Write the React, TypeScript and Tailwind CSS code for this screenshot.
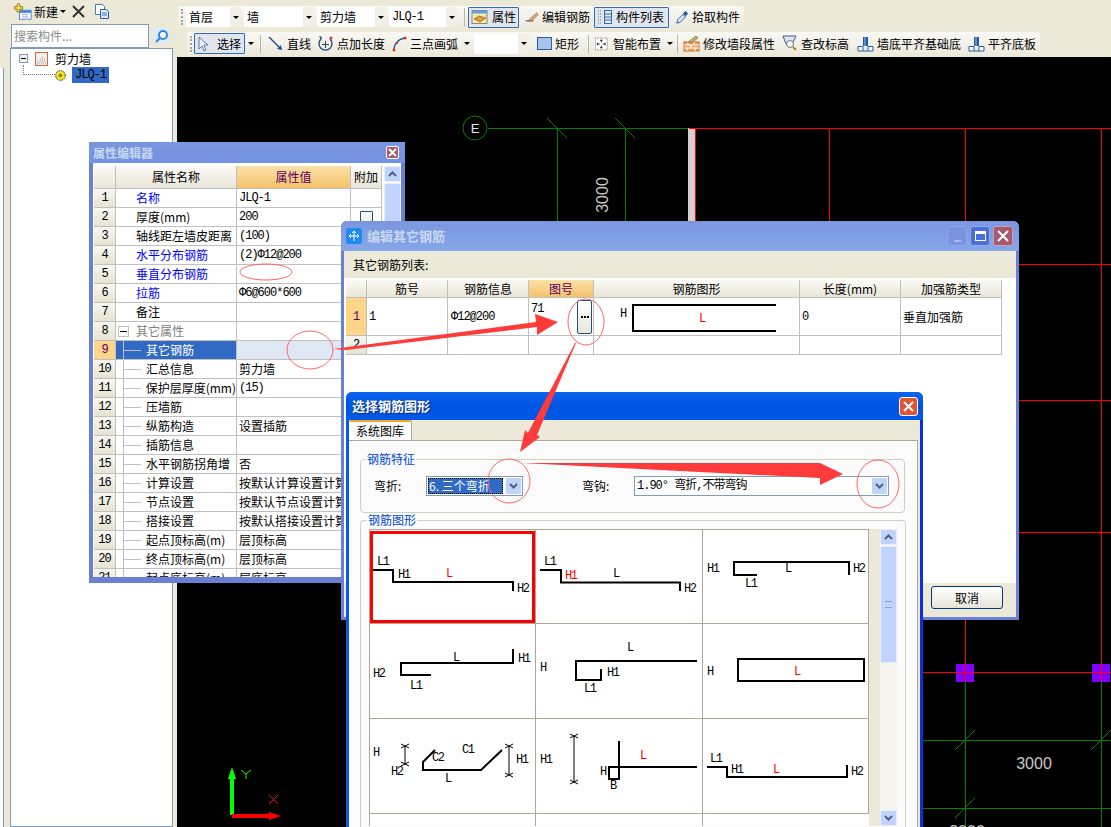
import type { ReactNode } from "react";

const mono = "font-['Liberation_Mono','Noto_Sans_CJK_SC',monospace] text-[12px] tracking-[-1px]";
const headCell = "flex items-center justify-center border-r border-b border-[#c0c0c0] bg-gradient-to-b from-[#fbfaf5] to-[#e9e6d8] text-[12px]";

function Caret() {
  return <span className="w-0 h-0 border-x-[3px] border-x-transparent border-t-[3px] border-t-black" />;
}

function IconNew() {
  return (
    <svg width="18" height="20" viewBox="0 0 20 20">
      <rect x="6" y="8" width="13" height="10" fill="#fff" stroke="#4a78c0" />
      <rect x="6" y="8" width="13" height="3" fill="#4a86d8" />
      <path d="M9 13h7M9 15.500h7" stroke="#7ea6d8" />
      <path d="M3.500 1h3v3h3v3h-3v3h-3V7h-3V4h3z" fill="#f6d84a" stroke="#8a7a20" />
    </svg>
  );
}

function IconCopy() {
  return (
    <svg width="16" height="17" viewBox="0 0 16 17">
      <path d="M1.500 1.500h7l2 2v8h-9z" fill="#fff" stroke="#4a78b8" />
      <path d="M6.500 6.500h6l2 2v7h-8z" fill="#dce9fa" stroke="#2a5ca8" />
      <path d="M8 10h5M8 12h5" stroke="#4a78b8" />
    </svg>
  );
}

function IconWall() {
  return (
    <svg width="14" height="14" viewBox="0 0 14 14">
      <rect x="0.500" y="0.500" width="12" height="13" fill="#f4efe8" stroke="#c86a3a" />
      <path d="M2 11h9M3 9h7M5 7h5M7 5h2" stroke="#9a9a9a" strokeDasharray="1 1" />
    </svg>
  );
}

function IconGear() {
  return (
    <svg width="11" height="11" viewBox="0 0 11 11">
      <circle cx="5.500" cy="5.500" r="4.800" fill="#f4ea20" stroke="#222" strokeDasharray="1.500 1" />
      <circle cx="5.500" cy="5.500" r="2" fill="#8a8a20" />
    </svg>
  );
}

const toolIcons: Record<string, ReactNode> = {
  attr: (
    <svg width="18" height="16" viewBox="0 0 18 16">
      <rect x="1" y="1.500" width="15" height="13" fill="#f8e8b8" stroke="#8a8a70" />
      <rect x="1" y="1.500" width="15" height="3" fill="#6aa0d8" />
      <path d="M3 10l5-3 7 2-6 4z" fill="#e89a28" stroke="#6a5a20" strokeWidth="0.600" />
    </svg>
  ),
  edit: (
    <svg width="18" height="16" viewBox="0 0 18 16">
      <path d="M1 13h10" stroke="#111" />
      <path d="M6 11l9-8 2 2-9 8-3 0z" fill="#e8b878" stroke="#7a3a20" strokeWidth="0.800" />
    </svg>
  ),
  list: (
    <svg width="16" height="16" viewBox="0 0 16 16">
      <path d="M1 2h3M1 5h3M1 8h3M1 11h3M1 14h3" stroke="#777" strokeDasharray="1 1" />
      <rect x="7.500" y="1.500" width="7" height="13" fill="#dbe8f6" stroke="#3a6aa0" />
      <path d="M8 5h6M8 8h6M8 11h6" stroke="#3a6aa0" />
    </svg>
  ),
  pick: (
    <svg width="14" height="17" viewBox="0 0 16 17">
      <path d="M2 15l1-4 6-6 3 3-6 6z" fill="#cfe4f8" stroke="#1f5ca8" />
      <path d="M9 4l3-3 3 3-3 3z" fill="#1f5ca8" />
    </svg>
  ),
  select: (
    <svg width="12" height="16" viewBox="0 0 12 16">
      <path d="M2 1v12l3-3 2 5 2-1-2-5h4z" fill="#e8eef8" stroke="#6a7a98" />
    </svg>
  ),
  line: (
    <svg width="16" height="16" viewBox="0 0 16 16">
      <path d="M1 1l12 12" stroke="#1f4f9a" strokeWidth="1.400" />
      <path d="M14 14l-5-1 4-4z" fill="#1f4f9a" />
    </svg>
  ),
  point: (
    <svg width="17" height="17" viewBox="0 0 17 17">
      <path d="M4 4a6.500 6.500 0 1 0 9 0" fill="none" stroke="#26457a" strokeWidth="1.300" />
      <path d="M8.500 6v7M5 9.500h7" stroke="#26457a" />
      <circle cx="14" cy="3" r="1.500" fill="#c83a3a" />
      <path d="M2 1l3 1-1 3z" fill="#26457a" />
    </svg>
  ),
  arc: (
    <svg width="15" height="16" viewBox="0 0 15 16">
      <path d="M2 14C2 8 6 3 13 2" fill="none" stroke="#1f5ca8" strokeWidth="1.300" />
      <circle cx="2" cy="14" r="1.500" fill="#d83a2a" />
      <circle cx="13" cy="2" r="1.500" fill="#d83a2a" />
      <circle cx="5" cy="7" r="1.200" fill="#d83a2a" />
    </svg>
  ),
  rect: (
    <svg width="15" height="13" viewBox="0 0 15 13">
      <rect x="0.500" y="0.500" width="14" height="12" fill="#a8c4ee" stroke="#2a5ca8" />
    </svg>
  ),
  smart: (
    <svg width="19" height="16" viewBox="0 0 19 16">
      <rect x="0.500" y="0.500" width="15" height="15" fill="#fff" stroke="#555" strokeDasharray="1 1" />
      <path d="M8 3v10M3 8h10" stroke="#111" strokeDasharray="3 4" />
      <path d="M8 2l-2 2h4zM8 14l-2-2h4zM2 8l2-2v4zM14 8l-2-2v4z" fill="#111" />
    </svg>
  ),
  modify: (
    <svg width="17" height="17" viewBox="0 0 17 17">
      <rect x="1" y="7" width="15" height="9" fill="#f0a060" stroke="#c86a2a" />
      <path d="M1 10h15M1 13h15M5 7v3M11 7v3M8 10v3M4 13v3M12 13v3" stroke="#fff" />
      <path d="M5 7l8-6 2 2-7 5z" fill="#c8b070" stroke="#6a5a30" strokeWidth="0.600" />
    </svg>
  ),
  elevation: (
    <svg width="16" height="17" viewBox="0 0 16 17">
      <path d="M1 1h13l-4 8H4z" fill="#dce6f4" stroke="#3a5a8a" />
      <circle cx="8" cy="9" r="3.500" fill="#f4f4f4" stroke="#777" />
      <path d="M11 12l3 3" stroke="#b8862a" strokeWidth="2" />
    </svg>
  ),
  align: (
    <svg width="17" height="16" viewBox="0 0 17 16">
      <path d="M6 1h5v9H6z" fill="#1f5ca8" />
      <path d="M8 1v9" stroke="#9ac0ea" />
      <path d="M1 10.500h5v4.500H1zM11 10.500h5v4.500h-5z" fill="#fff" stroke="#1f5ca8" />
      <path d="M6 15h5" stroke="#1f5ca8" />
    </svg>
  ),
};

function ToolButton({ w, icon, label, on, caret, wide }: { w: string; icon: string; label: string; on?: boolean; caret?: boolean; wide?: boolean }) {
  return (
    <div className={`${w} h-[21px] shrink-0 flex items-center ${wide ? "gap-[8px]" : "gap-[3px]"} pl-[2px] rounded-[1px] border ${on ? "border-[#316ac5] bg-[#e1e6ee]" : "border-transparent"}`}>
      {toolIcons[icon]}
      <span className="whitespace-nowrap">{label}</span>
      {caret && <span className="ml-[3px] flex"><Caret /></span>}
    </div>
  );
}

function Combo({ w, label }: { w: string; label: string }) {
  return (
    <div className={`${w} h-[20px] shrink-0 flex items-center bg-white pl-[3px]`}>
      <span className={`flex-1 whitespace-nowrap ${label === "JLQ-1" ? mono : ""}`}>{label}</span>
      <span className="w-[11px] h-full flex items-center justify-center bg-[#f1efe6]"><Caret /></span>
    </div>
  );
}

function Sep() {
  return <span className="w-px h-[18px] bg-[#b8b6a8] shrink-0" />;
}

function Grip() {
  return <span className="w-[2px] h-[16px] shrink-0 border-l-2 border-dotted border-[#a8a698]" />;
}

function Toolbars() {
  return (
    <div className="h-[57px] shrink-0 flex flex-col text-[12px] text-black">
      <div className="mt-[6px] ml-px w-[566px] h-[22px] flex items-center gap-[3px] pl-[3px] rounded-[2px] bg-gradient-to-b from-[#f9f8f3] to-[#ece9dc]">
        <Grip />
        <Combo w="w-[55px]" label="首层" />
        <Combo w="w-[70px]" label="墙" />
        <Combo w="w-[69px]" label="剪力墙" />
        <Combo w="w-[68px]" label="JLQ-1" />
        <span className="w-[2px]" />
        <Sep />
        <ToolButton w="w-[51px]" icon="attr" label="属性" on />
        <ToolButton w="w-[69px]" icon="edit" label="编辑钢筋" />
        <ToolButton w="w-[75px]" icon="list" label="构件列表" on />
        <ToolButton w="w-[72px]" icon="pick" label="拾取构件" />
      </div>
      <div className="mt-[4px] ml-[10px] w-[853px] h-[23px] flex items-center pl-[3px] rounded-[2px] bg-gradient-to-b from-[#f9f8f3] to-[#ece9dc]">
        <Grip />
        <div className="w-[2px] shrink-0" />
        <ToolButton w="w-[51px]" icon="select" label="选择" on wide />
        <span className="mx-[3px] flex"><Caret /></span>
        <span className="w-[3px]" />
        <Sep />
        <span className="w-[4px]" />
        <ToolButton w="w-[49px]" icon="line" label="直线" />
        <ToolButton w="w-[75px]" icon="point" label="点加长度" />
        <ToolButton w="w-[84px]" icon="arc" label="三点画弧" caret />
        <span className="w-[1px]" />
        <Combo w="w-[55px]" label="" />
        <span className="w-[5px]" />
        <ToolButton w="w-[46px]" icon="rect" label="矩形" />
        <span className="w-[8px]" />
        <Sep />
        <span className="w-[3px]" />
        <ToolButton w="w-[82px]" icon="smart" label="智能布置" caret />
        <span className="w-[3px]" />
        <Sep />
        <span className="w-[2px]" />
        <ToolButton w="w-[99px]" icon="modify" label="修改墙段属性" />
        <ToolButton w="w-[75px]" icon="elevation" label="查改标高" />
        <ToolButton w="w-[111px]" icon="align" label="墙底平齐基础底" />
        <ToolButton w="w-[75px]" icon="align" label="平齐底板" />
      </div>
    </div>
  );
}

function Sidebar() {
  return (
    <aside className="w-[177px] shrink-0 flex text-[12px] text-black">
      <div className="w-[10px] shrink-0 flex flex-col pt-[68px]">
        <div className="flex-1 w-[4px] bg-white border-r border-[#7f9db9]" />
      </div>
      <div className="w-[163px] flex flex-col">
        <div className="h-[23px] flex items-center gap-[2px] pl-[4px]">
          <IconNew />
          <span>新建</span>
          <Caret />
          <svg width="15" height="15" viewBox="0 0 15 15" className="ml-[3px]">
            <path d="M2 2l11 11M13 2L2 13" stroke="#333" strokeWidth="2" />
          </svg>
          <span className="w-[4px]" />
          <IconCopy />
        </div>
        <div className="h-[25px] flex items-center">
          <div className="w-[138px] h-[24px] flex items-center pl-[2px] bg-white border border-[#7f9db9] text-[#8a8a8a] ml-px">搜索构件...</div>
          <div className="w-[15px] h-[15px] ml-[5px] flex items-center justify-center bg-[#dcebfa]">
            <svg width="14" height="14" viewBox="0 0 14 14">
              <circle cx="8" cy="6" r="4" fill="#fff" stroke="#2a8ae0" strokeWidth="2" />
              <path d="M5 9l-4 4" stroke="#2a8ae0" strokeWidth="2.200" />
            </svg>
          </div>
        </div>
        <div className="flex-1 bg-white border border-[#7f9db9] pt-px pl-[8px]">
          <div className="flex items-center h-[17px]">
            <span className="w-[9px] h-[9px] border border-[#7f9db9] bg-[#eef0ea] flex items-center justify-center">
              <span className="w-[5px] h-px bg-black" />
            </span>
            <span className="ml-[7px] mr-[6px] flex"><IconWall /></span>
            <span>剪力墙</span>
          </div>
          <div className="flex items-center h-[16px] pl-[4px]">
            <span className="w-[32px] h-[10px] -mt-[10px] border-l border-b border-dotted border-[#808080]" />
            <IconGear />
            <span className={`${mono} ml-[6px] px-[3px] h-[16px] leading-[16px] bg-[#316ac5] text-black`}>JLQ-1</span>
          </div>
        </div>
      </div>
    </aside>
  );
}

function Canvas() {
  const ticks = [[557, 128], [625, 128], [965, 740], [1101, 740], [965, 808]];
  return (
    <div className="flex-1 bg-black overflow-hidden">
      <svg width="934" height="770" viewBox="177 57 934 770" className="block">
        <g stroke="#008000" fill="none">
          <circle cx="475" cy="128" r="12" />
          <path d="M488 128.500H688M557.500 128V221M625.500 128V221M923 740.500H1111M923 808.500H1111M965.500 682V827M1101.500 682V827" />
          {ticks.map(([x, y]) => (
            <path key={`${x}-${y}`} d={`M${x - 10} ${y - 10}L${x + 10} ${y + 10}`} transform={y > 500 ? `rotate(90 ${x} ${y})` : undefined} />
          ))}
        </g>
        <text x="475" y="133" fill="#e8e8e8" fontSize="13" textAnchor="middle" fontFamily="Liberation Sans">E</text>
        <text x="608" y="195" fill="#c8c8c8" fontSize="16" textAnchor="middle" fontFamily="Liberation Sans" transform="rotate(-90 608 195)">3000</text>
        <text x="1034" y="769" fill="#c8c8c8" fontSize="16" textAnchor="middle" fontFamily="Liberation Sans">3000</text>
        <text x="967" y="837" fill="#c8c8c8" fontSize="16" textAnchor="middle" fontFamily="Liberation Sans">3000</text>
        <rect x="688" y="128" width="7" height="94" fill="#d8d0d0" />
        <path d="M695.500 128V221" stroke="#f00" />
        <path d="M689 128.500H1111M1019 264.500H1111M923 400.500H1111M923 532.500H1111" stroke="#f00" />
        <path d="M829.500 128V221M965.500 128V221M1101.500 128V664M965.500 620V664" stroke="#f00" />
        <rect x="956" y="664" width="18" height="18" fill="#8000ff" />
        <rect x="1092" y="664" width="18" height="18" fill="#8000ff" />
        <path d="M965.500 664V682M1101.500 664V682M923 672.500H1111" stroke="#f00" />
        <path d="M232 815V772" stroke="#00ff00" strokeWidth="4" />
        <path d="M232 767l4 12h-8z" fill="#00ff00" />
        <path d="M232 816H272" stroke="#f00" strokeWidth="4" />
        <path d="M281 816l-12-4v8z" fill="#f00" />
        <path d="M241 770l5 4 5-4M246 774v5" stroke="#00ff00" fill="none" />
        <path d="M269 795l9 9M278 795l-9 9" stroke="#f00" />
      </svg>
    </div>
  );
}

type PropRow = { name: string; value?: string; blue?: boolean; child?: boolean; valueMono?: boolean };

const propRows: PropRow[] = [
  { name: "名称", value: "JLQ-1", blue: true, valueMono: true },
  { name: "厚度(mm)", value: "200", valueMono: true },
  { name: "轴线距左墙皮距离", value: "(100)", valueMono: true },
  { name: "水平分布钢筋", value: "(2)Φ12@200", blue: true, valueMono: true },
  { name: "垂直分布钢筋", blue: true },
  { name: "拉筋", value: "Φ6@600*600", blue: true, valueMono: true },
  { name: "备注" },
  { name: "其它属性" },
  { name: "其它钢筋", child: true },
  { name: "汇总信息", value: "剪力墙", child: true },
  { name: "保护层厚度(mm)", value: "(15)", child: true, valueMono: true },
  { name: "压墙筋", child: true },
  { name: "纵筋构造", value: "设置插筋", child: true },
  { name: "插筋信息", child: true },
  { name: "水平钢筋拐角增", value: "否", child: true },
  { name: "计算设置", value: "按默认计算设置计算", child: true },
  { name: "节点设置", value: "按默认节点设置计算", child: true },
  { name: "搭接设置", value: "按默认搭接设置计算", child: true },
  { name: "起点顶标高(m)", value: "层顶标高", child: true },
  { name: "终点顶标高(m)", value: "层顶标高", child: true },
  { name: "起点底标高(m)", value: "层底标高", child: true },
];

function ScrollUp() {
  return (
    <div className="h-[16px] shrink-0 flex items-center justify-center rounded-[2px] border border-[#e8eefc] bg-[#c1d3fb]">
      <svg width="9" height="6" viewBox="0 0 9 6"><path d="M1 5l3.500-3.500L8 5" fill="none" stroke="#4d6185" strokeWidth="2" /></svg>
    </div>
  );
}

function PropertyWindow() {
  return (
    <div className="absolute left-[89px] top-[142px] w-[316px] h-[441px] flex flex-col bg-white border-x-[4px] border-b-[6px] border-[#6a80d4] text-[12px] text-black">
      <div className="h-[21px] -mx-[4px] shrink-0 flex items-center justify-between pl-[4px] pr-[6px] bg-gradient-to-b from-[#7a96df] to-[#7392e2]">
        <span className="font-bold text-[#c9d8f2]">属性编辑器</span>
        <span className="w-[13px] h-[13px] flex items-center justify-center rounded-[2px] border border-white bg-[#a8596e]">
          <svg width="9" height="9" viewBox="0 0 9 9"><path d="M1 1l7 7M8 1L1 8" stroke="#fff" strokeWidth="2" /></svg>
        </span>
      </div>
      <div className="flex-1 flex pt-[3px] pl-px bg-white overflow-hidden">
        <div className="w-[288px] shrink-0 overflow-hidden">
          <div className="grid grid-cols-[22px_121px_114px_31px] grid-rows-[23px] auto-rows-[19px]">
            <div className={headCell} />
            <div className={headCell}>属性名称</div>
            <div className="flex items-center justify-center border-r border-b border-[#c0c0c0] bg-gradient-to-b from-[#fbe0a8] to-[#f4c268] text-[#5c0060]">属性值</div>
            <div className={headCell}>附加</div>
            {propRows.map((r, i) => {
              const selected = i === 8;
              const group = i === 7;
              return (
                <div key={r.name} className="contents">
                  <div className={`flex items-center justify-center border-r border-b border-[#c0c0c0] ${mono} ${selected ? "bg-[#ffd58a] text-[#5c0060]" : "bg-gradient-to-b from-[#f8f7f0] to-[#e6e3d2]"}`}>{i + 1}</div>
                  <div className={`flex items-center border-r border-b border-[#c0c0c0] whitespace-nowrap ${selected ? "bg-[#316ac5] text-white" : ""} ${r.blue ? "text-[#0000ff]" : ""} ${group ? "text-[#808080]" : ""}`}>
                    {r.child ? (
                      <>
                        <span className="w-[8px] h-full border-r border-[#c0c0c0]" />
                        <span className="w-[17px] h-px bg-[#c0c0c0]" />
                        <span className="ml-[5px]">{r.name}</span>
                      </>
                    ) : group ? (
                      <>
                        <span className="ml-[2px] w-[11px] h-[11px] border border-[#c0c0c0] flex items-center justify-center"><span className="w-[7px] h-px bg-black" /></span>
                        <span className="ml-[7px]">{r.name}</span>
                      </>
                    ) : (
                      <span className="ml-[20px]">{r.name}</span>
                    )}
                  </div>
                  <div className={`flex items-center pl-[2px] border-r border-b border-[#c0c0c0] whitespace-nowrap overflow-hidden ${selected ? "bg-[#e0e8f5]" : ""} ${r.valueMono ? mono : ""}`}>{r.value}</div>
                  <div className="flex items-center justify-center border-r border-b border-[#c0c0c0]">
                    {i === 1 && <span className="w-[13px] h-[13px] rounded-[1px] border border-[#1c5180] bg-gradient-to-b from-white to-[#ecebe4]" />}
                  </div>
                </div>
              );
            })}
          </div>
        </div>
        <div className="w-[17px] ml-[2px] flex flex-col gap-px">
          <ScrollUp />
          <div className="flex-1 bg-[#c1d3fb] rounded-[2px] border border-[#e8eefc]" />
        </div>
      </div>
    </div>
  );
}

const editCols = "grid grid-cols-[21px_81px_81px_65px_206px_101px_101px]";

function EditWindow() {
  const heads = ["", "筋号", "钢筋信息", "图号", "钢筋图形", "长度(mm)", "加强筋类型"];
  return (
    <div className="absolute left-[341px] top-[221px] w-[678px] h-[399px] flex flex-col rounded-t-[6px] border-x-[3px] border-b-[3px] border-[#6a80d4] bg-white text-[12px] text-black">
      <div className="h-[30px] -mx-[3px] shrink-0 flex items-center rounded-t-[6px] pl-[5px] pr-[6px] bg-gradient-to-b from-[#7a96df] to-[#85a8ea]">
        <span className="w-[16px] h-[16px] flex items-center justify-center rounded-[3px] bg-[#1f8af0]">
          <svg width="12" height="12" viewBox="0 0 12 12"><path d="M6 1v10M1 6h10M6 1L4 3M6 1l2 2M1 6l2-2M1 6l2 2M11 6L9 4M11 6L9 8" stroke="#fff" fill="none" /></svg>
        </span>
        <span className="ml-[5px] flex-1 font-bold text-[13px] text-[#c9d8f2]">编辑其它钢筋</span>
        <span className="w-[20px] h-[20px] flex items-end justify-center pb-[3px] rounded-[3px] border border-[#93a8e8] bg-[#7a95e0]"><span className="w-[7px] h-[2px] bg-[#a8b8ec]" /></span>
        <span className="ml-[3px] w-[20px] h-[20px] flex items-center justify-center rounded-[3px] border border-[#93a8e8] bg-[#4a6fd8]"><span className="w-[11px] h-[10px] border border-white border-t-[3px]" /></span>
        <span className="ml-[3px] w-[20px] h-[20px] flex items-center justify-center rounded-[3px] border border-[#c8a0b0] bg-[#a8596e]">
          <svg width="12" height="12" viewBox="0 0 12 12"><path d="M1 1l10 10M11 1L1 11" stroke="#fff" strokeWidth="2" /></svg>
        </span>
      </div>
      <div className="h-[27px] shrink-0 flex items-center pl-[9px] bg-[#ece9d8]">其它钢筋列表:</div>
      <div className="flex-1 pt-[2px] pl-[2px]">
        <div className={`${editCols} w-[656px]`}>
          {heads.map((h, i) => (
            <div key={i} className={`h-[18px] flex items-center justify-center border-r border-b border-[#c0c0c0] ${i === 3 ? "bg-gradient-to-b from-[#fbe0a8] to-[#f4c268] text-[#5c0060]" : "bg-gradient-to-b from-[#fbfaf5] to-[#e9e6d8]"}`}>{h}</div>
          ))}
          <div className={`h-[38px] flex items-center justify-center border-r border-b border-[#c0c0c0] bg-[#ffd58a] text-[#5c0060] ${mono}`}>1</div>
          <div className={`h-[38px] flex items-center pl-[2px] border-r border-b border-[#c0c0c0] ${mono}`}>1</div>
          <div className={`h-[38px] flex items-center pl-[3px] border-r border-b border-[#c0c0c0] ${mono}`}>Φ12@200</div>
          <div className="h-[38px] flex justify-between pl-[2px] pr-px pt-[2px] border-r border-b border-[#c0c0c0]">
            <span className={mono}>71</span>
            <span className="w-[15px] h-[34px] flex items-center justify-center gap-px rounded-[2px] border border-[#1c5180] bg-gradient-to-b from-white to-[#e8e6da]">
              <span className="w-[2px] h-[2px] bg-black" />
              <span className="w-[2px] h-[2px] bg-black" />
              <span className="w-[2px] h-[2px] bg-black" />
            </span>
          </div>
          <div className="h-[38px] border-r border-b border-[#c0c0c0]">
            <svg width="205" height="37" viewBox="594 298 205 37" className="block">
              <path d="M776 305H633V331H776" fill="none" stroke="#000" strokeWidth="2" />
              <text x="620" y="317" fontSize="12" fontFamily="Liberation Mono">H</text>
              <text x="699" y="322" fontSize="12" fill="#f00" fontFamily="Liberation Mono">L</text>
            </svg>
          </div>
          <div className={`h-[38px] flex items-center pl-[2px] border-r border-b border-[#c0c0c0] ${mono}`}>0</div>
          <div className="h-[38px] flex items-center pl-[2px] border-r border-b border-[#c0c0c0]">垂直加强筋</div>
          {heads.map((_, i) => (
            <div key={i} className={`h-[19px] flex items-center justify-center border-r border-b border-[#c0c0c0] ${mono} ${i === 0 ? "bg-gradient-to-b from-[#f8f7f0] to-[#e6e3d2]" : ""}`}>{i === 0 ? "2" : ""}</div>
          ))}
        </div>
      </div>
      <div className="h-[34px] shrink-0 flex justify-end pt-[3px] pr-[13px] bg-[#ece9d8]">
        <span className="w-[72px] h-[23px] flex items-center justify-center rounded-[3px] border border-[#003c74] bg-gradient-to-b from-white to-[#e6e4d8]">取消</span>
      </div>
    </div>
  );
}

type Label = [string, number, number, boolean?];
type Shape = { x: number; y: number; lines: string[]; thin?: string[]; labels: Label[]; selected?: boolean };

const shapes: Shape[] = [
  {
    x: 370, y: 531, selected: true,
    lines: ["M373 571H393V583H513V592"],
    labels: [["L1", 377, 566], ["H1", 398, 579], ["L", 446, 578, true], ["H2", 517, 593]],
  },
  {
    x: 536, y: 531,
    lines: ["M540 571H561V583.500H680V592"],
    labels: [["L1", 544, 566], ["H1", 565, 580, true], ["L", 613, 578], ["H2", 684, 593]],
  },
  {
    x: 703, y: 531,
    lines: ["M757 576H734V563H849V576"],
    labels: [["H1", 707, 573], ["L", 785, 573], ["H2", 853, 573], ["L1", 745, 588]],
  },
  {
    x: 370, y: 625,
    lines: ["M513 650V664H401V676H431"],
    labels: [["L", 453, 662], ["H1", 518, 663], ["H2", 373, 678], ["L1", 410, 690]],
  },
  {
    x: 536, y: 625,
    lines: ["M697 662H576V681H601V670"],
    labels: [["H", 540, 672], ["L", 627, 652], ["H1", 607, 677], ["L1", 584, 693]],
  },
  {
    x: 703, y: 625,
    lines: ["M738 660H864V682H738Z"],
    labels: [["H", 707, 676], ["L", 794, 676, true]],
  },
  {
    x: 370, y: 720,
    lines: ["M435 751L423 763V771H481L502 751"],
    thin: ["M405 747V765M401 745L409 749M409 745L401 749M401 763L409 767M409 763L401 767M509 747V776M505 745L513 749M513 745L505 749M505 774L513 778M513 774L505 778"],
    labels: [["H", 373, 757], ["H2", 391, 776], ["C2", 432, 762], ["C1", 462, 754], ["L", 445, 783], ["H1", 516, 764]],
  },
  {
    x: 536, y: 720,
    lines: ["M619 742V780H609V768H697"],
    thin: ["M574 737V783M570 735L578 739M578 735L570 739M570 781L578 785M578 781L570 785"],
    labels: [["H1", 540, 764], ["H", 600, 776], ["B", 610, 790], ["L", 640, 760, true]],
  },
  {
    x: 703, y: 720,
    lines: ["M707 768H727V778H847V766"],
    labels: [["L1", 710, 763], ["H1", 731, 774], ["L", 773, 774, true], ["H2", 851, 776]],
  },
];

function ShapeCell({ s }: { s: Shape }) {
  return (
    <div className="bg-white border-r border-b border-[#aca899] relative">
      <svg width="166" height="94" viewBox={`${s.x} ${s.y} 166 94`} className="block">
        {s.lines.map((d) => <path key={d} d={d} fill="none" stroke="#000" strokeWidth="2" />)}
        {s.thin?.map((d) => <path key={d} d={d} fill="none" stroke="#000" />)}
        {s.labels.map(([t, x, y, red]) => (
          <text key={t + x} x={x} y={y} fontSize="12" letterSpacing="-1.5" fontFamily="Liberation Mono" fill={red ? "#f00" : "#000"}>{t}</text>
        ))}
      </svg>
      {s.selected && <div className="absolute left-0 top-px w-[165px] h-[92px] border-[3px] border-[#f00]" />}
    </div>
  );
}

function Dropdown({ w, label, selected }: { w: string; label: string; selected?: boolean }) {
  return (
    <div className={`${w} h-[20px] flex items-center p-px bg-white border border-[#7f9db9]`}>
      {selected ? (
        <span className="flex-1 h-full flex items-center bg-[#316ac5] text-white border border-dotted border-black whitespace-nowrap overflow-hidden">{label}</span>
      ) : (
        <span className={`flex-1 pl-px whitespace-nowrap overflow-hidden ${mono}`}>{label}</span>
      )}
      <span className="ml-[3px] w-[15px] h-[16px] flex items-center justify-center rounded-[1px] bg-[#c1d3fb]">
        <svg width="9" height="6" viewBox="0 0 9 6"><path d="M1 1l3.500 3.500L8 1" fill="none" stroke="#4d6185" strokeWidth="2" /></svg>
      </span>
    </div>
  );
}

function ShapeWindow() {
  return (
    <div className="absolute left-[346px] top-[392px] w-[577px] h-[445px] flex flex-col rounded-t-[6px] border-l-[3px] border-r-[3px] border-l-[#0a5ce8] border-r-[#0831d9] bg-[#ece9d8] text-[12px] text-black">
      <div className="h-[28px] -mx-[3px] shrink-0 flex items-center justify-between pl-[6px] pr-[5px] rounded-t-[6px] bg-gradient-to-b from-[#0a64ee] via-[#0054e3] to-[#0058e6]">
        <span className="font-bold text-[13px] text-white [text-shadow:1px_1px_1px_#0a2a80]">选择钢筋图形</span>
        <span className="w-[19px] h-[19px] flex items-center justify-center rounded-[3px] border border-white bg-[#e0553a]">
          <svg width="11" height="11" viewBox="0 0 11 11"><path d="M1 1l9 9M10 1l-9 9" stroke="#fff" strokeWidth="2" /></svg>
        </span>
      </div>
      <div className="h-[20px] shrink-0 flex">
        <div className="w-[63px] h-[20px] relative z-10 flex items-center justify-center bg-[#fcfcfe] border-t-2 border-t-[#f5a623] border-r border-r-[#aca899] rounded-t-[2px]">系统图库</div>
      </div>
      <div className="w-[569px] flex-1 flex flex-col bg-[#fbfbfc] border-t border-r border-[#aca899] pl-[11px] pr-[12px]">
        <fieldset className="mt-[11px] h-[61px] flex-none border border-[#d0d0bf] rounded-[4px] pl-[6px]">
          <legend className="px-px -ml-px text-[#0046d5] leading-[14px]">钢筋特征</legend>
          <div className="flex items-center h-[40px] pl-[7px]">
            <span className="w-[52px]">弯折:</span>
            <Dropdown w="w-[97px]" label="6. 三个弯折" selected />
            <span className="ml-[59px] w-[52px]">弯钩:</span>
            <Dropdown w="w-[255px]" label="1.90° 弯折,不带弯钩" />
          </div>
        </fieldset>
        <fieldset className="flex-1 border-t border-x border-[#d0d0bf] rounded-t-[4px] px-[8px]">
          <legend className="px-px -ml-[2px] text-[#0046d5] leading-[14px]">钢筋图形</legend>
          <div className="flex mt-[2px] h-[297px] overflow-hidden">
            <div className="w-[500px] h-[380px] border-t border-l border-[#aca899] grid grid-cols-[166px_167px_166px] grid-rows-[94px_95px_95px_95px] bg-white">
              {shapes.map((s) => <ShapeCell key={`${s.x}-${s.y}`} s={s} />)}
              <div className="bg-white border-r border-[#aca899]" />
              <div className="bg-white border-r border-[#aca899]" />
              <div className="bg-white" />
            </div>
            <div className="w-[11px] bg-[#ece9d8]" />
            <div className="w-[17px] flex flex-col bg-[#f5f5ee]">
              <ScrollUp />
              <div className="mt-px h-[117px] flex items-center justify-center rounded-[2px] border border-[#e8eefc] bg-[#c1d3fb]">
                <span className="w-[7px] h-[7px] border-y border-[#8ea4d0]" />
              </div>
              <div className="flex-1" />
              <div className="h-[16px] flex items-center justify-center rounded-[2px] border border-[#e8eefc] bg-[#c1d3fb]">
                <svg width="9" height="6" viewBox="0 0 9 6"><path d="M1 1l3.500 3.500L8 1" fill="none" stroke="#4d6185" strokeWidth="2" /></svg>
              </div>
            </div>
          </div>
        </fieldset>
      </div>
    </div>
  );
}

// 图上手工标注的红色箭头和圈
function Annotations() {
  return (
    <svg width="1111" height="827" viewBox="0 0 1111 827" className="absolute left-0 top-0 pointer-events-none">
      <g fill="none" stroke="#f66" strokeWidth="1">
        <ellipse cx="266" cy="272" rx="26" ry="8" />
        <ellipse cx="310" cy="350" rx="23" ry="19" />
        <ellipse cx="586" cy="322" rx="18" ry="23" />
        <ellipse cx="509" cy="481" rx="21" ry="22" />
        <ellipse cx="878" cy="484" rx="21" ry="24" />
      </g>
      <g fill="#ff3a3a">
        <path d="M333 349L536 322L535 314L558 322L537 335L537 327L346 350Z" />
        <path d="M576 343L537 435L540 437L520 452L525 430L528 433L575 343Z" />
        <path d="M522 463L820 463L843 474L820 485V478Z" />
      </g>
    </svg>
  );
}

export default function App() {
  return (
    <div className="relative w-[1111px] h-[827px] overflow-hidden flex bg-[#ece9d8] font-['Noto_Sans_CJK_SC','Liberation_Sans',sans-serif] text-[12px]">
      <Sidebar />
      <main className="flex-1 flex flex-col">
        <Toolbars />
        <Canvas />
      </main>
      <PropertyWindow />
      <EditWindow />
      <ShapeWindow />
      <Annotations />
    </div>
  );
}
